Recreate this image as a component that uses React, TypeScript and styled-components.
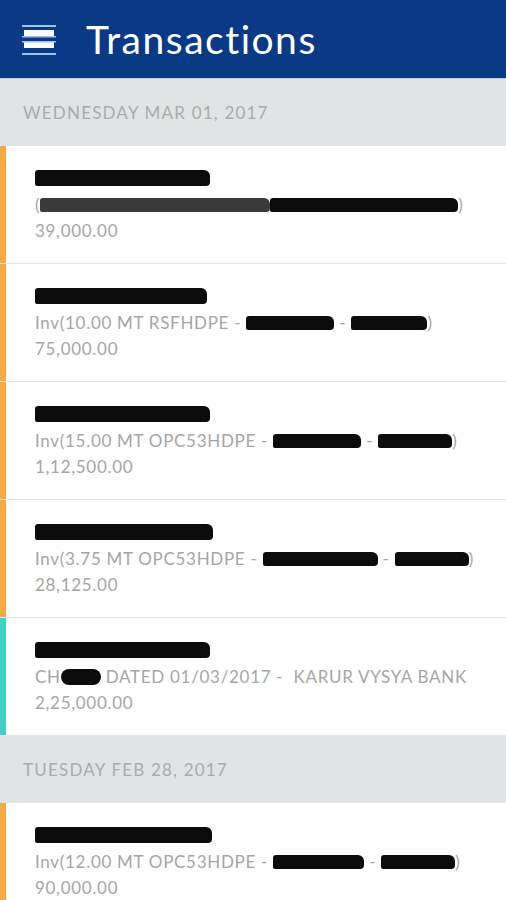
import React from 'react';
import styled, { createGlobalStyle } from 'styled-components';

const BLUE = '#0a3a86';
const ORANGE = '#f7a942';
const TEAL = '#3fd1c5';
const GREY_TEXT = '#a6a6a6';

const GlobalStyle = createGlobalStyle`
  html, body {
    margin: 0;
    padding: 0;
    background: #ffffff;
    font-family: Lato, "Open Sans", sans-serif;
  }
`;

type Part = string | { w: number; shade?: 'dark' | 'grey'; round?: boolean };

interface Txn {
  name: number;
  detail: Part[];
  amount: string;
  kind: 'inv' | 'chq';
}

interface Day {
  date: string;
  items: Txn[];
}

const days: Day[] = [
  {
    date: 'WEDNESDAY MAR 01, 2017',
    items: [
      {
        name: 175,
        detail: ['(', { w: 230, shade: 'grey' }, { w: 188 }, ')'],
        amount: '39,000.00',
        kind: 'inv',
      },
      {
        name: 172,
        detail: ['Inv(10.00 MT RSFHDPE - ', { w: 88 }, ' - ', { w: 76 }, ')'],
        amount: '75,000.00',
        kind: 'inv',
      },
      {
        name: 175,
        detail: ['Inv(15.00 MT OPC53HDPE - ', { w: 88 }, ' - ', { w: 74 }, ')'],
        amount: '1,12,500.00',
        kind: 'inv',
      },
      {
        name: 178,
        detail: ['Inv(3.75 MT OPC53HDPE - ', { w: 115 }, ' - ', { w: 74 }, ')'],
        amount: '28,125.00',
        kind: 'inv',
      },
      {
        name: 175,
        detail: ['CH', { w: 40, round: true }, ' DATED 01/03/2017 -  KARUR VYSYA BANK'],
        amount: '2,25,000.00',
        kind: 'chq',
      },
    ],
  },
  {
    date: 'TUESDAY FEB 28, 2017',
    items: [
      {
        name: 177,
        detail: ['Inv(12.00 MT OPC53HDPE - ', { w: 91 }, ' - ', { w: 74 }, ')'],
        amount: '90,000.00',
        kind: 'inv',
      },
    ],
  },
];

function MenuIcon() {
  return (
    <svg width="36" height="32" viewBox="0 0 36 32">
      <rect x="1" y="1" width="34" height="2" fill="#9fc1ee" />
      <rect x="3" y="6" width="30" height="6" fill="#ffffff" />
      <rect x="1" y="12" width="34" height="1.5" fill="#9fc1ee" />
      <rect x="3" y="18" width="30" height="6" fill="#ffffff" />
      <rect x="1" y="17" width="34" height="1.5" fill="#9fc1ee" />
      <rect x="1" y="29" width="34" height="2" fill="#9fc1ee" />
    </svg>
  );
}

function App() {
  return (
    <>
      <GlobalStyle />
      <Screen>
        <TopBar>
          <MenuButton aria-label="menu">
            <MenuIcon />
          </MenuButton>
          <Title>Transactions</Title>
        </TopBar>
        {days.map((day) => (
          <section key={day.date}>
            <DateHeader>{day.date}</DateHeader>
            {day.items.map((t, i) => (
              <Row key={i} $accent={t.kind === 'chq' ? TEAL : ORANGE}>
                <NameLine>
                  <Redacted $w={t.name} $h={16} />
                </NameLine>
                <Line>
                  {t.detail.map((p, j) =>
                    typeof p === 'string' ? (
                      <span key={j}>{p}</span>
                    ) : (
                      <Redacted key={j} $w={p.w} $h={p.round ? 16 : 14} $grey={p.shade === 'grey'} $round={p.round} />
                    ),
                  )}
                </Line>
                <Line>{t.amount}</Line>
              </Row>
            ))}
          </section>
        ))}
      </Screen>
    </>
  );
}

export default App;

const Screen = styled.div`
  width: 506px;
  height: 900px;
  overflow: hidden;
  background: #ffffff;
`;

const TopBar = styled.header`
  display: flex;
  align-items: center;
  height: 78px;
  padding: 0 0 0 21px;
  background: ${BLUE};
  border-bottom: 1px solid #b8c6d6;
`;

const MenuButton = styled.div`
  display: flex;
  width: 36px;
  height: 32px;
  margin-right: 29px;
  margin-top: 2px;
`;

const Title = styled.h1`
  margin: 0;
  font-family: Lato, sans-serif;
  font-weight: 400;
  font-size: 39px;
  letter-spacing: 1.5px;
  color: #ffffff;
`;

const DateHeader = styled.div`
  display: flex;
  align-items: center;
  height: 67px;
  padding-left: 23px;
  background: #e1e4e5;
  color: #a9abac;
  font-size: 17px;
  letter-spacing: 1.2px;
`;

const Row = styled.div<{ $accent: string }>`
  padding: 20px 0 19px 35px;
  border-bottom: 1px solid #e4e4e4;
  box-shadow: inset 6px 0 0 ${(p) => p.$accent};
`;

const Line = styled.div`
  height: 26px;
  line-height: 26px;
  font-size: 17px;
  color: ${GREY_TEXT};
  letter-spacing: 0.7px;
  white-space: pre;
`;

const NameLine = styled(Line)`
  display: flex;
  align-items: center;
`;

const Redacted = styled.span<{ $w: number; $h: number; $grey?: boolean; $round?: boolean }>`
  display: inline-block;
  vertical-align: middle;
  width: ${(p) => p.$w}px;
  height: ${(p) => p.$h}px;
  margin-top: -3px;
  background: ${(p) => (p.$grey ? '#3a3a3a' : '#0c0c0c')};
  border-radius: ${(p) => (p.$round ? '8px' : '3px 6px 4px 2px')};
  filter: blur(0.5px);
`;
